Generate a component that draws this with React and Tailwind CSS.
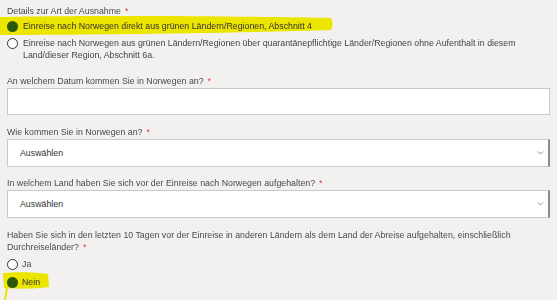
import React from "react";

const Star = () => <span className="text-[#e0413a] ml-[4px]">*</span>;

const Radio = ({ checked }) =>
  checked ? (
    <span className="inline-block w-[11px] h-[11px] rounded-full bg-[#2c5a06] shrink-0" />
  ) : (
    <span className="inline-block w-[11px] h-[11px] rounded-full border border-[#333] bg-white shrink-0" />
  );

const Chevron = () => (
  <svg width="7" height="5" viewBox="0 0 7 5" className="absolute right-[4px] top-1/2 -translate-y-1/2">
    <path d="M1 1 L3.5 3.5 L6 1" fill="none" stroke="#888" strokeWidth="1" />
  </svg>
);

const Select = () => (
  <div className="relative h-[28px] mx-[7px] mt-[1px] bg-white border border-[#cacaca] border-r-2 border-r-[#8a8a8a] flex items-center pl-[12px] text-[#333]">
    Auswählen
    <Chevron />
  </div>
);

export default function App() {
  return (
    <div
      className="relative w-[557px] h-[300px] overflow-hidden bg-[#f3f1f0] text-[8.8px] text-[#4a4a4a] leading-[12px]"
      style={{ fontFamily: '"Liberation Sans", Arial, sans-serif' }}
    >
      {/* marker highlights */}
      <svg className="absolute inset-0 pointer-events-none mix-blend-multiply" width="557" height="300">
        <path d="M0 17 C80 15 250 16 331 18 Q334 24 331 30 C250 33 80 35 0 35 Z" fill="#f7f300" />
        <path d="M3 273 C15 272 35 272 48 274 L49 287 C35 289 15 289 4 288 Z" fill="#f7f300" />
        <path d="M7 288 L5 300" stroke="#f7f300" strokeWidth="2" />
      </svg>

      <div className="relative flex flex-col pt-[5px]">
        <div className="px-[7px]">
          Details zur Art der Ausnahme<Star />
        </div>
        <div className="flex items-center gap-[5px] px-[7px] mt-[3px] text-[#333]">
          <Radio checked />
          <span>Einreise nach Norwegen direkt aus grünen Ländern/Regionen, Abschnitt 4</span>
        </div>
        <div className="flex items-start gap-[5px] px-[7px] mt-[5px] text-[#444]">
          <span className="mt-[1px]"><Radio /></span>
          <span className="w-[510px]">
            Einreise nach Norwegen aus grünen Ländern/Regionen über quarantänepflichtige Länder/Regionen ohne Aufenthalt in diesem Land/dieser Region, Abschnitt 6a.
          </span>
        </div>

        <div className="px-[7px] mt-[14px]">
          An welchem Datum kommen Sie in Norwegen an?<Star />
        </div>
        <div className="h-[27px] mx-[7px] mt-[1px] bg-white border border-[#cacaca]" />

        <div className="px-[7px] mt-[11px]">
          Wie kommen Sie in Norwegen an?<Star />
        </div>
        <Select />

        <div className="px-[7px] mt-[10px]">
          In welchem Land haben Sie sich vor der Einreise nach Norwegen aufgehalten?<Star />
        </div>
        <Select />

        <div className="px-[7px] mt-[12px] leading-[11.5px] w-[540px]">
          Haben Sie sich in den letzten 10 Tagen vor der Einreise in anderen Ländern als dem Land der Abreise aufgehalten, einschließlich Durchreiseländer?<Star />
        </div>
        <div className="flex items-center gap-[4px] px-[7px] mt-[5px]">
          <Radio />
          <span>Ja</span>
        </div>
        <div className="flex items-center gap-[4px] px-[7px] mt-[6px] text-[#333]">
          <Radio checked />
          <span>Nein</span>
        </div>
      </div>
    </div>
  );
}
